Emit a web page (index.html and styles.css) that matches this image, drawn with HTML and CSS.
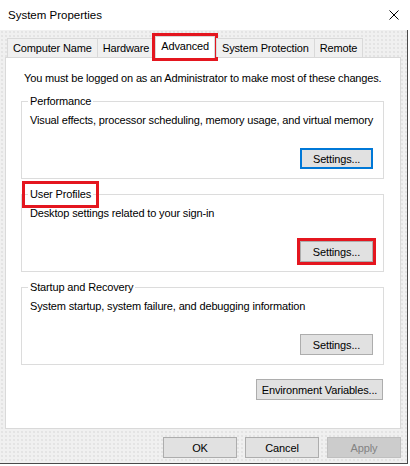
FILE: index.html
```html
<!DOCTYPE html>
<html lang="en">
<head>
    <meta charset="UTF-8">
    <meta name="viewport" content="width=device-width, initial-scale=1.0">
    <title>System Properties</title>
    <link rel="stylesheet" href="styles.css">
</head>
<body>
    <div class="window">
        <div class="titlebar">
            <span class="title">System Properties</span>
            <svg class="close" width="10" height="10" viewBox="0 0 10 10">
                <path d="M0.5 0.5 L9.5 9.5 M9.5 0.5 L0.5 9.5" stroke="#000" stroke-width="1" fill="none"/>
            </svg>
        </div>

        <div class="dialog">
            <div class="tabs">
                <div class="tab">Computer Name</div>
                <div class="tab">Hardware</div>
                <div class="tab active marked">Advanced</div>
                <div class="tab">System Protection</div>
                <div class="tab">Remote</div>
            </div>

            <div class="panel">
                <p class="note">You must be logged on as an Administrator to make most of these changes.</p>

                <fieldset class="group">
                    <legend>Performance</legend>
                    <p>Visual effects, processor scheduling, memory usage, and virtual memory</p>
                    <button class="btn focused">Settings...</button>
                </fieldset>

                <fieldset class="group">
                    <legend class="marked">User Profiles</legend>
                    <p>Desktop settings related to your sign-in</p>
                    <button class="btn marked">Settings...</button>
                </fieldset>

                <fieldset class="group">
                    <legend>Startup and Recovery</legend>
                    <p>System startup, system failure, and debugging information</p>
                    <button class="btn">Settings...</button>
                </fieldset>

                <div class="env-row">
                    <button class="btn env">Environment Variables...</button>
                </div>
            </div>

            <div class="footer">
                <button class="btn">OK</button>
                <button class="btn">Cancel</button>
                <button class="btn" disabled>Apply</button>
            </div>
        </div>
    </div>
</body>
</html>
```

FILE: styles.css
```css
html, body {
    margin: 0;
    padding: 0;
}
body {
    background: #fff;
    font-family: "Liberation Sans", Arial, sans-serif;
    font-size: 11px;
    letter-spacing: -0.15px;
    color: #000;
}
.window {
    width: 410px;
    height: 466px;
}
.titlebar {
    height: 30px;
    display: flex;
    align-items: center;
    justify-content: space-between;
    padding: 0 11px 0 8px;
    background: #fff;
}
.title {
    font-size: 11.5px;
    letter-spacing: 0;
}
.close {
    display: block;
}
.dialog {
    width: 408px;
    height: 434px;
    background-color: #f0f0f0;
    background-image: radial-gradient(circle, #e3e3e3 0.7px, transparent 1px);
    background-size: 4px 4px;
    border-right: 1px solid #4a4a4a;
    border-bottom: 1px solid #4a4a4a;
    box-sizing: border-box;
    padding-top: 3px;
}
.tabs {
    display: flex;
    align-items: flex-end;
    height: 24px;
    padding-left: 7px;
    position: relative;
    z-index: 1;
}
.tab {
    height: 18px;
    line-height: 19px;
    padding: 0 5px;
    border: 1px solid #d9d9d9;
    border-bottom: none;
    margin-right: -1px;
    background: #f0f0f0;
}
.tab.active {
    height: 21px;
    line-height: 19px;
    margin: 0 1px -1px 1px;
    padding: 0 5px;
    background: #fff;
}
.marked {
    outline: 3px solid #e4161f;
}
.panel {
    margin-left: 5px;
    width: 396px;
    height: 372px;
    box-sizing: border-box;
    background: #fff;
    border: 1px solid #d9d9d9;
    padding: 13px 16px 0 15px;
}
p {
    margin: 0;
    line-height: 15px;
    white-space: nowrap;
}
.note {
    padding-left: 3px;
}
.group {
    margin: 8px 0 0 0;
    padding: 4px 10px 9px 8px;
    border: 1px solid #dcdcdc;
    height: 85px;
    box-sizing: border-box;
}
.group legend {
    padding: 0 2px;
    margin-left: -2px;
    line-height: 15px;
}
.group legend.marked {
    outline-offset: 3px;
}
.btn {
    display: block;
    width: 73px;
    height: 21px;
    padding: 0;
    font-family: inherit;
    font-size: 11px;
    letter-spacing: -0.15px;
    color: #000;
    background: #e1e1e1;
    border: 1px solid #adadad;
}
.group .btn {
    margin: 20px 0 0 auto;
}
.btn.focused {
    border: 2px solid #0078d7;
}
.btn:disabled {
    background: #cccccc;
    border-color: #bfbfbf;
    color: #838383;
}
.env-row {
    display: flex;
    justify-content: flex-end;
    margin-top: 14px;
}
.btn.env {
    width: 127px;
    margin-right: 1px;
}
.footer {
    display: flex;
    justify-content: flex-end;
    gap: 8px;
    padding: 8px 6px 0 0;
}
.footer .btn {
    width: 74px;
}
```
